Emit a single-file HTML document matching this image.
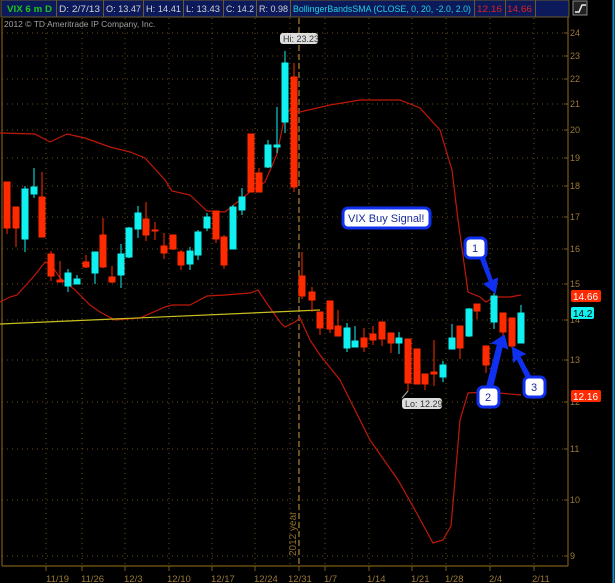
<!DOCTYPE html>
<html><head><meta charset="utf-8"><style>
html,body{margin:0;padding:0;background:#000;width:615px;height:583px;overflow:hidden}
svg{display:block}
text{font-family:"Liberation Sans",sans-serif}
</style></head><body>
<svg width="615" height="583" viewBox="0 0 615 583" xmlns="http://www.w3.org/2000/svg">
<rect width="615" height="583" fill="#000"/>
<line x1="613.5" y1="0" x2="613.5" y2="583" stroke="#1a8fd0" stroke-width="2"/>
<!-- header -->
<rect x="1" y="0" width="568" height="17" fill="#0c1a5c" stroke="#6b5a2a"/>
<g stroke="#6b5a2a"><line x1="56.5" y1="0" x2="56.5" y2="17"/><line x1="103.5" y1="0" x2="103.5" y2="17"/><line x1="143.5" y1="0" x2="143.5" y2="17"/><line x1="183.5" y1="0" x2="183.5" y2="17"/><line x1="223.5" y1="0" x2="223.5" y2="17"/><line x1="256.5" y1="0" x2="256.5" y2="17"/><line x1="290.5" y1="0" x2="290.5" y2="17"/><line x1="474.5" y1="0" x2="474.5" y2="17"/><line x1="505.5" y1="0" x2="505.5" y2="17"/><line x1="535.5" y1="0" x2="535.5" y2="17"/></g>
<g font-size="9.5" fill="#d0d0d0">
<text x="7" y="12" fill="#18c818" font-weight="bold" textLength="45" lengthAdjust="spacingAndGlyphs">VIX 6 m D</text>
<text x="59" y="12" textLength="41" lengthAdjust="spacingAndGlyphs">D: 2/7/13</text>
<text x="106" y="12" textLength="35" lengthAdjust="spacingAndGlyphs">O: 13.47</text>
<text x="146" y="12" textLength="35" lengthAdjust="spacingAndGlyphs">H: 14.41</text>
<text x="186" y="12" textLength="34" lengthAdjust="spacingAndGlyphs">L: 13.43</text>
<text x="226" y="12" textLength="28" lengthAdjust="spacingAndGlyphs">C: 14.2</text>
<text x="259" y="12" textLength="29" lengthAdjust="spacingAndGlyphs">R: 0.98</text>
<text x="293" y="12" fill="#20d0e0" textLength="178" lengthAdjust="spacingAndGlyphs">BollingerBandsSMA (CLOSE, 0, 20, -2.0, 2.0)</text>
<text x="477" y="12" fill="#e02020" textLength="25" lengthAdjust="spacingAndGlyphs">12.16</text>
<text x="507" y="12" fill="#e02020" textLength="25" lengthAdjust="spacingAndGlyphs">14.66</text>
</g>
<rect x="573" y="1" width="14" height="14" fill="#222" stroke="#888"/>
<path d="M575 12 H579 L582 5 H586" stroke="#eee" stroke-width="1.5" fill="none"/>
<text x="4" y="27" font-size="8.5" fill="#a0a0a0">2012 © TD Ameritrade IP Company, Inc.</text>
<!-- grid -->
<g stroke="#6a5018" stroke-dasharray="1,4" stroke-width="1">
<line x1="2" y1="33" x2="568" y2="33"/><line x1="2" y1="56" x2="568" y2="56"/><line x1="2" y1="79" x2="568" y2="79"/><line x1="2" y1="104" x2="568" y2="104"/><line x1="2" y1="130" x2="568" y2="130"/><line x1="2" y1="158" x2="568" y2="158"/><line x1="2" y1="186" x2="568" y2="186"/><line x1="2" y1="217" x2="568" y2="217"/><line x1="2" y1="249" x2="568" y2="249"/><line x1="2" y1="284" x2="568" y2="284"/><line x1="2" y1="320" x2="568" y2="320"/><line x1="2" y1="360" x2="568" y2="360"/><line x1="2" y1="402" x2="568" y2="402"/><line x1="2" y1="449" x2="568" y2="449"/><line x1="2" y1="500" x2="568" y2="500"/><line x1="2" y1="556" x2="568" y2="556"/>
<line x1="46" y1="18" x2="46" y2="566"/><line x1="82" y1="18" x2="82" y2="566"/><line x1="125" y1="18" x2="125" y2="566"/><line x1="169" y1="18" x2="169" y2="566"/><line x1="212" y1="18" x2="212" y2="566"/><line x1="255" y1="18" x2="255" y2="566"/><line x1="290" y1="18" x2="290" y2="566"/><line x1="325" y1="18" x2="325" y2="566"/><line x1="369" y1="18" x2="369" y2="566"/><line x1="412" y1="18" x2="412" y2="566"/><line x1="446" y1="18" x2="446" y2="566"/><line x1="490" y1="18" x2="490" y2="566"/><line x1="534" y1="18" x2="534" y2="566"/>
</g>
<line x1="299" y1="18" x2="299" y2="566" stroke="#8a6a28" stroke-dasharray="6,3" stroke-width="1.5"/>
<text transform="translate(296,556) rotate(-90)" font-size="10" fill="#8a6a28">2012 year</text>
<!-- axes -->
<g stroke="#7a5a18" stroke-width="1.2">
<line x1="2" y1="18" x2="2" y2="566"/><line x1="2" y1="566" x2="568" y2="566"/><line x1="568" y1="17" x2="568" y2="566"/>
</g>
<g stroke="#7a5a18"><line x1="46" y1="566" x2="46" y2="571"/><line x1="82" y1="566" x2="82" y2="571"/><line x1="125" y1="566" x2="125" y2="571"/><line x1="169" y1="566" x2="169" y2="571"/><line x1="212" y1="566" x2="212" y2="571"/><line x1="255" y1="566" x2="255" y2="571"/><line x1="299" y1="566" x2="299" y2="571"/><line x1="325" y1="566" x2="325" y2="571"/><line x1="369" y1="566" x2="369" y2="571"/><line x1="412" y1="566" x2="412" y2="571"/><line x1="446" y1="566" x2="446" y2="571"/><line x1="490" y1="566" x2="490" y2="571"/><line x1="534" y1="566" x2="534" y2="571"/>
<path d="M564 33h4M564 56h4M564 79h4M564 104h4M564 130h4M564 158h4M564 186h4M564 217h4M564 249h4M564 284h4M564 320h4M564 360h4M564 402h4M564 449h4M564 500h4M564 556h4"/></g>
<g font-size="9" fill="#9a7a38">
<text x="570" y="36">24</text><text x="570" y="59">23</text><text x="570" y="82">22</text><text x="570" y="107">21</text><text x="570" y="133">20</text><text x="570" y="161">19</text><text x="570" y="189">18</text><text x="570" y="220">17</text><text x="570" y="252">16</text><text x="570" y="287">15</text><text x="570" y="323">14</text><text x="570" y="363">13</text><text x="570" y="405">12</text><text x="570" y="452">11</text><text x="570" y="503">10</text><text x="570" y="559">9</text>
</g>
<g font-size="9.5" fill="#9a7a38">
<text x="46" y="582">11/19</text><text x="81" y="582">11/26</text><text x="124" y="582">12/3</text><text x="167" y="582">12/10</text><text x="211" y="582">12/17</text><text x="254" y="582">12/24</text><text x="288" y="582">12/31</text><text x="324" y="582">1/7</text><text x="367" y="582">1/14</text><text x="411" y="582">1/21</text><text x="445" y="582">1/28</text><text x="489" y="582">2/4</text><text x="532" y="582">2/11</text>
</g>
<!-- bands -->
<polyline fill="none" stroke="#c01808" stroke-width="1.2" points="0,133 35,134 50,142 67,134 85,138 110,147 130,152 145,158 165,180 172,191 190,195 207,211 225,212 250,192 265,182 277,154 285,115 290,110 300,112 330,105 360,100 400,100 420,108 440,130 452,170 458,220 465,270 468,292 480,297 486,302 495,297 510,297 521,295"/>
<polyline fill="none" stroke="#c01808" stroke-width="1.2" points="0,302 10,297 17,295 35,275 45,262 50,263 60,278 75,290 90,305 100,312 115,320 140,318 165,307 172,305 190,305 207,296 225,295 250,293 258,290 268,305 280,322 285,327 295,322 300,318 310,340 320,355 340,380 370,440 398,480 415,510 433,543 443,540 451,526 455,480 460,420 468,393 488,392 521,395"/>
<line x1="0" y1="324" x2="320" y2="310" stroke="#c8c020" stroke-width="1.2"/>
<!-- candles -->
<g stroke-width="1">
<g fill="#ff2a00" stroke="#ff2a00">
<line x1="7" y1="182" x2="7" y2="234"/><rect x="4" y="182" width="6" height="46"/>
<line x1="16" y1="207" x2="16" y2="247"/><rect x="13" y="207" width="6" height="21"/>
<line x1="42" y1="172" x2="42" y2="237"/><rect x="39" y="197" width="6" height="40"/>
<line x1="51" y1="251" x2="51" y2="281"/><rect x="48" y="254" width="6" height="22"/>
<line x1="60" y1="261" x2="60" y2="282"/><rect x="57" y="280" width="6" height="2"/>
<line x1="86" y1="255" x2="86" y2="268"/><rect x="83" y="262" width="6" height="5"/>
<line x1="103" y1="218" x2="103" y2="268"/><rect x="100" y="235" width="6" height="32"/>
<line x1="112" y1="266" x2="112" y2="283"/><rect x="109" y="277" width="6" height="5"/>
<line x1="146" y1="202" x2="146" y2="241"/><rect x="143" y="219" width="6" height="16"/>
<line x1="155" y1="222" x2="155" y2="240"/><rect x="152" y="230" width="6" height="1"/>
<line x1="164" y1="233" x2="164" y2="259"/><rect x="161" y="246" width="6" height="7"/>
<line x1="173" y1="235" x2="173" y2="250"/><rect x="170" y="235" width="6" height="14"/>
<line x1="181" y1="250" x2="181" y2="270"/><rect x="178" y="252" width="6" height="13"/>
<line x1="216" y1="211" x2="216" y2="243"/><rect x="213" y="211" width="6" height="28"/>
<line x1="224" y1="235" x2="224" y2="269"/><rect x="221" y="237" width="6" height="28"/>
<line x1="251" y1="134" x2="251" y2="192"/><rect x="248" y="134" width="6" height="58"/>
<line x1="259" y1="168" x2="259" y2="192"/><rect x="256" y="173" width="6" height="19"/>
<line x1="294" y1="63" x2="294" y2="192"/><rect x="291" y="77" width="6" height="110"/>
<line x1="302" y1="252" x2="302" y2="299"/><rect x="299" y="276" width="6" height="20"/>
<line x1="312" y1="287" x2="312" y2="312"/><rect x="309" y="292" width="6" height="8"/>
<line x1="320" y1="312" x2="320" y2="335"/><rect x="317" y="312" width="6" height="16"/>
<line x1="330" y1="301" x2="330" y2="333"/><rect x="327" y="301" width="6" height="28"/>
<line x1="338" y1="310" x2="338" y2="336"/><rect x="335" y="326" width="6" height="10"/>
<line x1="364" y1="328" x2="364" y2="352"/><rect x="361" y="338" width="6" height="9"/>
<line x1="373" y1="326" x2="373" y2="345"/><rect x="370" y="334" width="6" height="6"/>
<line x1="382" y1="322" x2="382" y2="346"/><rect x="379" y="322" width="6" height="17"/>
<line x1="391" y1="333" x2="391" y2="353"/><rect x="388" y="333" width="6" height="10"/>
<line x1="408" y1="339" x2="408" y2="391"/><rect x="405" y="339" width="6" height="44"/>
<line x1="417" y1="349" x2="417" y2="384"/><rect x="414" y="349" width="6" height="35"/>
<line x1="425" y1="374" x2="425" y2="390"/><rect x="422" y="374" width="6" height="10"/>
<line x1="434" y1="340" x2="434" y2="386"/><rect x="431" y="372" width="6" height="2"/>
<line x1="460" y1="326" x2="460" y2="359"/><rect x="457" y="326" width="6" height="22"/>
<line x1="477" y1="304" x2="477" y2="319"/><rect x="474" y="304" width="6" height="7"/>
<line x1="486" y1="346" x2="486" y2="373"/><rect x="483" y="346" width="6" height="19"/>
<line x1="503" y1="313" x2="503" y2="340"/><rect x="500" y="313" width="6" height="19"/>
<line x1="512" y1="318" x2="512" y2="348"/><rect x="509" y="318" width="6" height="28"/>
</g>
<g fill="#10f0f0" stroke="#10f0f0">
<line x1="25" y1="186" x2="25" y2="252"/><rect x="22" y="189" width="6" height="50"/>
<line x1="34" y1="168" x2="34" y2="198"/><rect x="31" y="187" width="6" height="7"/>
<line x1="68" y1="269" x2="68" y2="292"/><rect x="65" y="273" width="6" height="13"/>
<line x1="77" y1="275" x2="77" y2="284"/><rect x="74" y="279" width="6" height="5"/>
<line x1="95" y1="252" x2="95" y2="284"/><rect x="92" y="252" width="6" height="21"/>
<line x1="121" y1="244" x2="121" y2="288"/><rect x="118" y="254" width="6" height="21"/>
<line x1="129" y1="227" x2="129" y2="258"/><rect x="126" y="228" width="6" height="29"/>
<line x1="138" y1="206" x2="138" y2="238"/><rect x="135" y="213" width="6" height="16"/>
<line x1="190" y1="247" x2="190" y2="270"/><rect x="187" y="251" width="6" height="13"/>
<line x1="198" y1="230" x2="198" y2="260"/><rect x="195" y="232" width="6" height="23"/>
<line x1="207" y1="213" x2="207" y2="231"/><rect x="204" y="217" width="6" height="11"/>
<line x1="233" y1="205" x2="233" y2="249"/><rect x="230" y="207" width="6" height="42"/>
<line x1="242" y1="188" x2="242" y2="215"/><rect x="239" y="197" width="6" height="13"/>
<line x1="268" y1="140" x2="268" y2="168"/><rect x="265" y="145" width="6" height="22"/>
<line x1="277" y1="107" x2="277" y2="153"/><rect x="274" y="145" width="6" height="2"/>
<line x1="285" y1="51" x2="285" y2="133"/><rect x="282" y="63" width="6" height="59"/>
<line x1="347" y1="323" x2="347" y2="352"/><rect x="344" y="328" width="6" height="20"/>
<line x1="355" y1="326" x2="355" y2="347"/><rect x="352" y="341" width="6" height="6"/>
<line x1="399" y1="332" x2="399" y2="354"/><rect x="396" y="338" width="6" height="5"/>
<line x1="443" y1="361" x2="443" y2="382"/><rect x="440" y="365" width="6" height="12"/>
<line x1="452" y1="324" x2="452" y2="349"/><rect x="449" y="338" width="6" height="11"/>
<line x1="469" y1="308" x2="469" y2="337"/><rect x="466" y="309" width="6" height="27"/>
<line x1="494" y1="293" x2="494" y2="329"/><rect x="491" y="296" width="6" height="26"/>
<line x1="521" y1="305" x2="521" y2="343"/><rect x="518" y="313" width="6" height="30"/>
</g>
</g>
<!-- hi/lo labels -->
<rect x="280" y="33" width="38" height="11" rx="3" fill="#ddd"/>
<text x="283" y="42" font-size="9" fill="#333">Hi: 23.23</text>
<rect x="402" y="398" width="40" height="11" rx="3" fill="#ddd"/>
<text x="405" y="407" font-size="9" fill="#333">Lo: 12.29</text>
<line x1="402" y1="398" x2="408" y2="391" stroke="#aaa"/>
<!-- price flags -->
<rect x="571" y="290" width="30" height="12" rx="2" fill="#ff2a00"/><text x="573" y="300" font-size="10" fill="#fff">14.66</text>
<rect x="571" y="307" width="23" height="12" rx="2" fill="#10f0f0"/><text x="573" y="317" font-size="10" fill="#000">14.2</text>
<rect x="571" y="390" width="30" height="12" rx="2" fill="#ff2a00"/><text x="573" y="400" font-size="10" fill="#fff">12.16</text>
<!-- annotations -->
<g stroke="#1030f0" fill="#1030f0">
<path d="M481 259 L490 282 L485 284 L495 292 L497 279 L492 281 L484 257 Z" stroke-width="2"/>
<path d="M487 387 L498 344 L493 343 L504 336 L507 348 L502 346 L492 388 Z" stroke-width="2"/>
<path d="M531 378 L519 356 L524 354 L513 348 L514 361 L517 358 L528 380 Z" stroke-width="2"/>
</g>
<g fill="#fff" stroke="#1030f0" stroke-width="3">
<rect x="343" y="208" width="87" height="20" rx="5"/>
<rect x="465" y="238" width="21" height="20" rx="5"/>
<rect x="478" y="387" width="21" height="20" rx="5"/>
<rect x="524" y="377" width="21" height="20" rx="5"/>
</g>
<g font-size="11" fill="#1a2a9a">
<text x="348" y="222">VIX Buy Signal!</text>
<text x="472" y="252">1</text>
<text x="485" y="401">2</text>
<text x="531" y="391">3</text>
</g>
</svg>
</body></html>
